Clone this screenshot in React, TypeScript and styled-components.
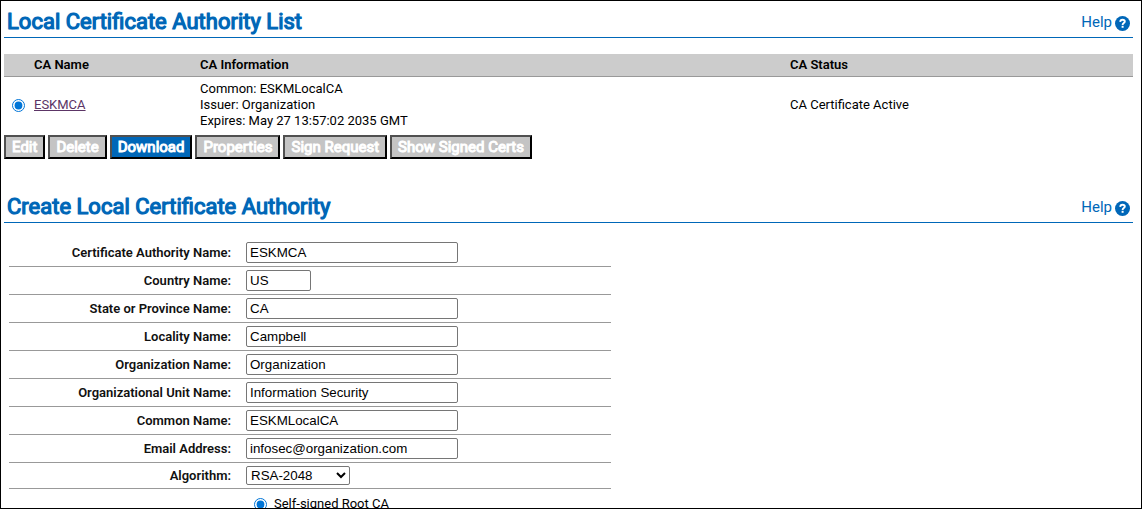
import React from "react";
import styled, { createGlobalStyle } from "styled-components";

const BLUE = "#0067b8";
const SANS = 'Roboto, "Liberation Sans", sans-serif';

const GlobalStyle = createGlobalStyle`
  *, *::before, *::after { box-sizing: border-box; }
  body {
    margin: 0;
    background: #fff;
    color: #000;
    font: 13px/16px ${SANS};
  }
`;

const Page = styled.main`
  height: 100vh;
  overflow: hidden;
  border: 1px solid #000;
  padding: 5px 8px 0 3px;
`;

const SectionHeader = styled.header`
  display: flex;
  justify-content: space-between;
  align-items: center;
  height: 32px;
  padding: 0 3px;
  border-bottom: 1px solid ${BLUE};
`;

const Title = styled.h2`
  margin: 0;
  font-size: 22px;
  line-height: 30px;
  font-weight: 400;
  -webkit-text-stroke: 1px ${BLUE};
  text-shadow: 0 0 1px ${BLUE};
  color: ${BLUE};
`;

const HelpLink = styled.a`
  display: flex;
  align-items: center;
  gap: 3px;
  font-size: 15px;
  line-height: 18px;
  color: ${BLUE};
  text-decoration: none;
`;

const HelpIcon = styled.svg`
  width: 15px;
  height: 15px;
  margin-top: 3px;
`;

const CaTable = styled.table`
  width: 100%;
  margin-top: 16px;
  border-collapse: separate;
  border-spacing: 0;
  table-layout: fixed;
`;

const HeadCell = styled.th<{ $width?: number }>`
  width: ${(p) => (p.$width ? `${p.$width}px` : "auto")};
  height: 23px;
  padding: 0 2px;
  background: #ccc;
  border-bottom: 1px solid #999;
  text-align: left;
  font-weight: 600;
`;

const Cell = styled.td`
  padding: 4px 2px;
  vertical-align: middle;
`;

const Radio = styled.input`
  display: block;
  width: 13px;
  height: 13px;
  margin: 0 0 0 6px;
  accent-color: #0075d7;
`;

const VisitedLink = styled.a`
  color: #5c3566;
  text-decoration: underline;
`;

const ButtonBar = styled.div`
  display: flex;
  flex-wrap: wrap;
  gap: 3px;
  margin-top: 2px;
`;

const ActionButton = styled.button<{ $primary?: boolean }>`
  height: 24px;
  padding: 0 6px;
  border: 2px solid;
  border-color: #505050 #000 #000 #505050;
  border-radius: 0;
  background: ${(p) => (p.$primary ? BLUE : "#c4c4c4")};
  color: #fff;
  font: 400 15px/18px ${SANS};
  -webkit-text-stroke: 1px #fff;
  white-space: nowrap;
`;

const CreateSection = styled.section`
  margin-top: 32px;
`;

const Form = styled.form`
  max-width: 602px;
  margin: 16px 0 0 5px;
`;

const Row = styled.div`
  display: grid;
  grid-template-columns: 222px 1fr;
  column-gap: 15px;
  align-items: center;
  padding: 3px 0;
  border-bottom: 1px solid #999;
`;

const Label = styled.label`
  text-align: right;
  font-weight: 600;
  color: #111;
`;

const TextInput = styled.input<{ $short?: boolean }>`
  width: ${(p) => (p.$short ? 65 : 212)}px;
  height: 21px;
  padding: 1px 3px;
  border: 1px solid #767676;
  border-radius: 2px;
  background: #fff;
  color: #000;
  font-family: "Liberation Sans", sans-serif;
`;

const Select = styled.select`
  width: 104px;
  height: 19px;
  border: 1px solid #767676;
  border-radius: 2px;
  background: #fff;
  color: #000;
  font-family: "Liberation Sans", sans-serif;
`;

const RadioOption = styled.label`
  display: flex;
  align-items: center;
  gap: 7px;
  margin: 7px 0 0 239px;
`;

const Help = () => (
  <HelpLink href="#help">
    Help
    <HelpIcon viewBox="0 0 15 15" aria-hidden="true">
      <circle cx="7.5" cy="7.5" r="7.5" fill={BLUE} />
      <path
        d="M5.2 5.9C5.3 4.4 6.2 3.7 7.5 3.7S9.8 4.4 9.8 5.6C9.8 7.1 7.6 7.1 7.6 8.9"
        fill="none"
        stroke="#fff"
        strokeWidth="1.9"
      />
      <rect x="6.6" y="9.8" width="2" height="2" fill="#fff" />
    </HelpIcon>
  </HelpLink>
);

const actions = [
  { label: "Edit" },
  { label: "Delete" },
  { label: "Download", primary: true },
  { label: "Properties" },
  { label: "Sign Request" },
  { label: "Show Signed Certs" },
];

const fields = [
  { id: "caName", label: "Certificate Authority Name:", value: "ESKMCA" },
  { id: "country", label: "Country Name:", value: "US", short: true },
  { id: "state", label: "State or Province Name:", value: "CA" },
  { id: "locality", label: "Locality Name:", value: "Campbell" },
  { id: "org", label: "Organization Name:", value: "Organization" },
  { id: "unit", label: "Organizational Unit Name:", value: "Information Security" },
  { id: "common", label: "Common Name:", value: "ESKMLocalCA" },
  { id: "email", label: "Email Address:", value: "infosec@organization.com" },
];

export default function App() {
  return (
    <>
      <GlobalStyle />
      <Page>
        <section>
          <SectionHeader>
            <Title>Local Certificate Authority List</Title>
            <Help />
          </SectionHeader>
          <CaTable>
            <thead>
              <tr>
                <HeadCell $width={28} />
                <HeadCell $width={166}>CA Name</HeadCell>
                <HeadCell $width={590}>CA Information</HeadCell>
                <HeadCell>CA Status</HeadCell>
              </tr>
            </thead>
            <tbody>
              <tr>
                <Cell>
                  <Radio type="radio" name="ca" aria-label="ESKMCA" defaultChecked />
                </Cell>
                <Cell>
                  <VisitedLink href="#eskmca">ESKMCA</VisitedLink>
                </Cell>
                <Cell>
                  Common: ESKMLocalCA
                  <br />
                  Issuer: Organization
                  <br />
                  Expires: May 27 13:57:02 2035 GMT
                </Cell>
                <Cell>CA Certificate Active</Cell>
              </tr>
            </tbody>
          </CaTable>
          <ButtonBar>
            {actions.map((a) => (
              <ActionButton key={a.label} type="button" $primary={a.primary}>
                {a.label}
              </ActionButton>
            ))}
          </ButtonBar>
        </section>

        <CreateSection>
          <SectionHeader>
            <Title>Create Local Certificate Authority</Title>
            <Help />
          </SectionHeader>
          <Form>
            {fields.map((f) => (
              <Row key={f.id}>
                <Label htmlFor={f.id}>{f.label}</Label>
                <TextInput id={f.id} type="text" defaultValue={f.value} $short={f.short} />
              </Row>
            ))}
            <Row>
              <Label htmlFor="algorithm">Algorithm:</Label>
              <Select id="algorithm" defaultValue="RSA-2048">
                <option>RSA-2048</option>
              </Select>
            </Row>
            <RadioOption>
              <Radio type="radio" name="caType" defaultChecked />
              Self-signed Root CA
            </RadioOption>
          </Form>
        </CreateSection>
      </Page>
    </>
  );
}
